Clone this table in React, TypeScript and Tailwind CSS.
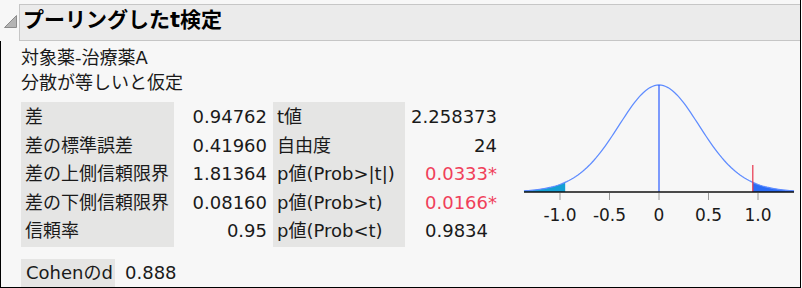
import React from 'react';

type Row = { label: string; value: string; star?: 'red' | 'blank' };

const leftRows: Row[] = [
  { label: '差', value: '0.94762' },
  { label: '差の標準誤差', value: '0.41960' },
  { label: '差の上側信頼限界', value: '1.81364' },
  { label: '差の下側信頼限界', value: '0.08160' },
  { label: '信頼率', value: '0.95' },
];

const rightRows: Row[] = [
  { label: 't値', value: '2.258373' },
  { label: '自由度', value: '24' },
  { label: 'p値(Prob>|t|)', value: '0.0333', star: 'red' },
  { label: 'p値(Prob>t)', value: '0.0166', star: 'red' },
  { label: 'p値(Prob<t)', value: '0.9834', star: 'blank' },
];

// t distribution (24 df) scaled by the std error, drawn in pixel space
const SE = 0.4196;
const pdf = (u: number) => Math.pow(1 + (u / SE) ** 2 / 24, -12.5);
const px = (u: number) => 148 + u * 99;
const py = (u: number) => 122 - 107 * pdf(u);

function curve(a: number, b: number) {
  const pts: string[] = [];
  const n = 120;
  for (let i = 0; i <= n; i++) {
    const u = a + ((b - a) * i) / n;
    pts.push(`${px(u).toFixed(2)},${py(u).toFixed(2)}`);
  }
  return pts;
}

function tail(a: number, b: number) {
  return `M${px(a).toFixed(2)},122 L${curve(a, b).join(' L')} L${px(b).toFixed(2)},122 Z`;
}

function DistChart() {
  const ticks = [-1, -0.5, 0, 0.5, 1];
  const labels = ['-1.0', '-0.5', '0', '0.5', '1.0'];
  return (
    <svg width="290" height="160" viewBox="0 0 290 160" className="mt-[29px] ml-[13px] shrink-0">
      <path d={tail(-1.364, -0.94762)} fill="#14a0d4" />
      <path d={tail(0.94762, 1.364)} fill="#2b6cf6" />
      <polyline points={curve(-1.364, 1.364).join(' ')} fill="none" stroke="#5f8cff" strokeWidth="1.25" />
      <line x1="148" y1="15" x2="148" y2="122" stroke="#2a5cff" strokeWidth="1.2" />
      <line x1="241.8" y1="95" x2="241.8" y2="122" stroke="#e8344c" strokeWidth="1.2" />
      <line x1="13" y1="122" x2="283" y2="122" stroke="#111" strokeWidth="1.6" />
      {ticks.map((t, i) => (
        <g key={t}>
          <line x1={px(t)} y1="123" x2={px(t)} y2="130" stroke="#9a9a9a" strokeWidth="1" />
          <text
            x={px(t)}
            y="151"
            textAnchor="middle"
            fontSize="17"
            fill="#1a1a1a"
            fontFamily="'DejaVu Sans', sans-serif"
          >
            {labels[i]}
          </text>
        </g>
      ))}
    </svg>
  );
}

export default function App() {
  return (
    <div className="w-[801px] h-[288px] border-r border-b border-black bg-[#f7f7f7] text-[#1a1a1a] text-[18px] font-['DejaVu_Sans','Noto_Sans_CJK_JP',sans-serif] overflow-hidden">
      {/* outline header */}
      <div className="flex items-start pt-[4px]">
        <svg width="19" height="37" viewBox="0 0 19 37" className="shrink-0">
          <path d="M4.5 23.5 L16.5 11.5 L16.5 23.5 Z" fill="#b4b4b4" stroke="#8c8c8c" strokeWidth="1" />
        </svg>
        <div className="flex-1 h-[37px] border-y border-l border-[#c6c6c6] bg-[#ebebeb] flex items-center pl-[3px] pb-[5px]">
          <span className="text-[21px] font-bold text-black leading-none">プーリングしたt検定</span>
        </div>
      </div>

      {/* report body */}
      <div className="h-[246px] border-l border-black flex">
        <div className="pl-[20px] w-[497px] shrink-0">
          <div className="mt-[4px] leading-[25px]">
            <div>対象薬-治療薬A</div>
            <div>分散が等しいと仮定</div>
          </div>

          <div className="mt-[7px] flex">
            <div className="w-[153px] bg-[#e5e5e4] py-[1px] pl-[4px]">
              {leftRows.map((r) => (
                <div key={r.label} className="leading-[28.5px] whitespace-nowrap">{r.label}</div>
              ))}
            </div>
            <div className="w-[93px] py-[1px] text-right">
              {leftRows.map((r) => (
                <div key={r.label} className="leading-[28.5px]">{r.value}</div>
              ))}
            </div>
            <div className="ml-[6px] w-[132px] bg-[#e5e5e4] py-[1px] pl-[4px]">
              {rightRows.map((r) => (
                <div key={r.label} className="leading-[28.5px] whitespace-nowrap">{r.label}</div>
              ))}
            </div>
            <div className="w-[92px] py-[1px] text-right">
              {rightRows.map((r) => (
                <div
                  key={r.label}
                  className={r.star === 'red' ? 'leading-[28.5px] text-[#f0405a]' : 'leading-[28.5px]'}
                >
                  {r.value}
                  {r.star === 'red' && <span>*</span>}
                  {r.star === 'blank' && <span className="invisible">*</span>}
                </div>
              ))}
            </div>
          </div>

          <div className="mt-[12px] flex items-center">
            <div className="w-[94px] h-[28px] bg-[#e5e5e4] pl-[5px] leading-[28px]">Cohenのd</div>
            <div className="ml-[10px] leading-[28px]">0.888</div>
          </div>
        </div>

        <DistChart />
      </div>
    </div>
  );
}
